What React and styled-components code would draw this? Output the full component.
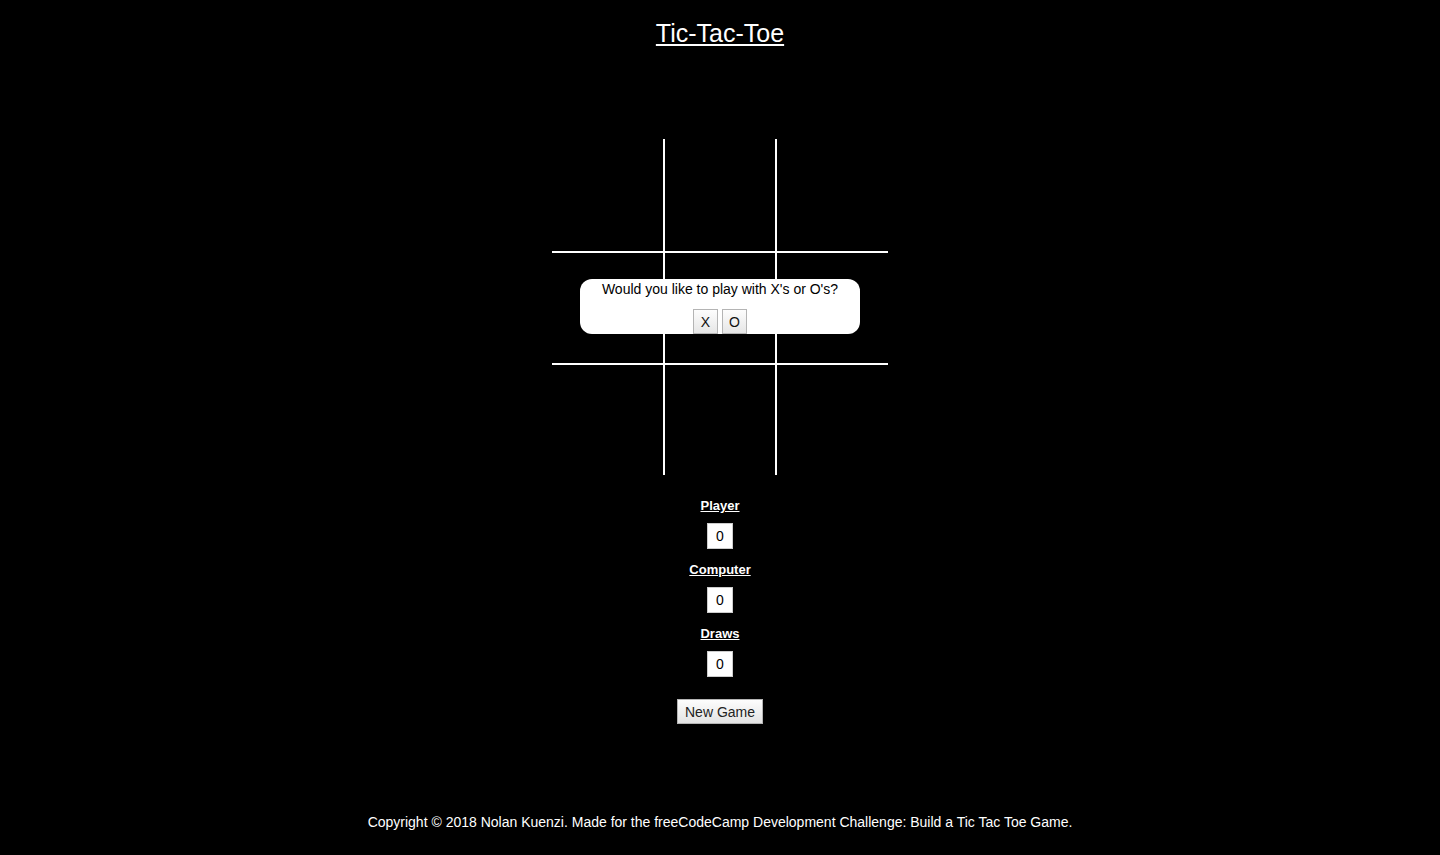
import styled, { createGlobalStyle } from "styled-components"

const GlobalStyle = createGlobalStyle`
    html, body {
        margin: 0;
        padding: 0;
        background: #000;
        font-family: "Liberation Sans", Arial, Helvetica, sans-serif;
        color: #fff;
    }
`

const scores = [
    { label: 'Player', value: 0 },
    { label: 'Computer', value: 0 },
    { label: 'Draws', value: 0 },
]

const App = (() => {
    const cells = Array.from({ length: 9 }, (_, i) => i)

    return (
        <Page>
            <GlobalStyle />
            <Title>Tic-Tac-Toe</Title>
            <Board>
                {cells.map((i) => (
                    <Cell key={i} $col={i % 3} $row={Math.floor(i / 3)} />
                ))}
                <Chooser>
                    <ChooserText>Would you like to play with X's or O's?</ChooserText>
                    <ChoiceRow>
                        <ChoiceButton>X</ChoiceButton>
                        <ChoiceButton>O</ChoiceButton>
                    </ChoiceRow>
                </Chooser>
            </Board>
            <ScoreList>
                {scores.map((s) => (
                    <ScoreGroup key={s.label}>
                        <ScoreLabel>{s.label}</ScoreLabel>
                        <ScoreBox>{s.value}</ScoreBox>
                    </ScoreGroup>
                ))}
            </ScoreList>
            <NewGameButton>New Game</NewGameButton>
            <Footer>
                Copyright © 2018 Nolan Kuenzi. Made for the freeCodeCamp Development Challenge: Build a Tic Tac Toe Game.
            </Footer>
        </Page>
    )
})

export default App

const Page = styled.div`
    display: flex;
    flex-direction: column;
    align-items: center;
    min-height: 855px;
    box-sizing: border-box;
`

const Title = styled.h1`
    margin: 19px 0 0;
    font-size: 25px;
    line-height: 28px;
    font-weight: normal;
    text-decoration: underline;
    text-underline-offset: 2px;
    color: #fff;
`

const Board = styled.div`
    position: relative;
    margin-top: 92px;
    display: grid;
    grid-template-columns: 113px 112px 111px;
    grid-template-rows: 114px 112px 110px;
    width: 336px;
`

const Cell = styled.div`
    box-sizing: border-box;
    border-right: ${(p) => (p.$col < 2 ? '2px solid #fff' : 'none')};
    border-bottom: ${(p) => (p.$row < 2 ? '2px solid #fff' : 'none')};
`

const Chooser = styled.div`
    position: absolute;
    left: 28px;
    top: 140px;
    width: 280px;
    height: 55px;
    box-sizing: border-box;
    padding-top: 1px;
    background: #fff;
    border-radius: 12px;
    display: flex;
    flex-direction: column;
    align-items: center;
    color: #000;
`

const ChooserText = styled.div`
    font-size: 14px;
    line-height: 18px;
`

const ChoiceRow = styled.div`
    display: flex;
    gap: 4px;
    margin-top: 11px;
`

const ChoiceButton = styled.button`
    font-family: inherit;
    font-size: 14px;
    height: 25px;
    min-width: 25px;
    padding: 0 6px;
    color: #111;
    background: linear-gradient(#fdfdfd, #e6e6e6);
    border: 1px solid #b4b4b4;
    border-radius: 0;
`

const ScoreList = styled.div`
    display: flex;
    flex-direction: column;
    align-items: center;
    margin-top: 23px;
`

const ScoreGroup = styled.div`
    display: flex;
    flex-direction: column;
    align-items: center;
    margin-bottom: 13px;
`

const ScoreLabel = styled.div`
    font-size: 13px;
    line-height: 16px;
    font-weight: bold;
    text-decoration: underline;
    color: #fff;
`

const ScoreBox = styled.div`
    margin-top: 9px;
    width: 26px;
    height: 26px;
    box-sizing: border-box;
    border: 1px solid #ccc;
    background: #fff;
    color: #000;
    font-size: 14px;
    display: flex;
    align-items: center;
    justify-content: center;
`

const NewGameButton = styled.button`
    margin-top: 9px;
    font-family: inherit;
    font-size: 14px;
    height: 25px;
    padding: 0 7px;
    color: #222;
    background: linear-gradient(#fdfdfd, #e3e3e3);
    border: 1px solid #b4b4b4;
    border-radius: 0;
`

const Footer = styled.footer`
    margin-top: 90px;
    font-size: 14px;
    line-height: 17px;
    color: #fff;
`
